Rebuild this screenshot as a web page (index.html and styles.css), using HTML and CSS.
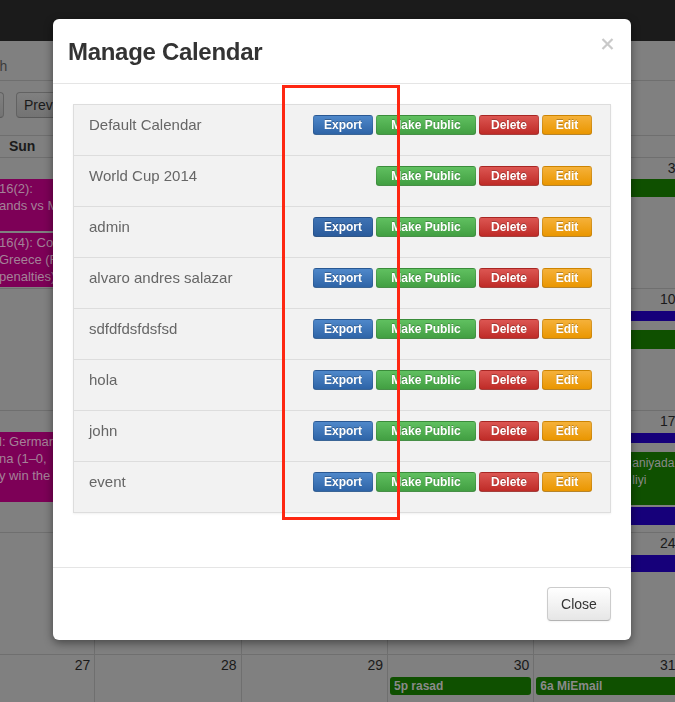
FILE: index.html
```html
<!DOCTYPE html>
<html lang="en">
<head>
<meta charset="utf-8">
<title>Manage Calendar</title>
<link rel="stylesheet" href="styles.css">
</head>
<body>
<div class="page">
  <header class="navbar"></header>
  <div class="searchbar"><span class="search-text">Search</span></div>
  <div class="toolbar">
    <button class="tbtn tbtn-today">Today</button>
    <button class="tbtn tbtn-prev">Prev</button>
  </div>
  <div class="calendar">
    <div class="cal-head">
      <div class="dow">Sun</div><div class="dow"></div><div class="dow"></div><div class="dow"></div><div class="dow"></div><div class="dow"></div><div class="dow"></div>
    </div>
    <div class="week week-1">
      <div class="day">
        <div class="daynum"></div>
        <div class="ev ev-purple ev-p1"><div>16(2):</div><div>ands vs M</div></div>
        <div class="ev ev-purple ev-p2"><div>16(4): Co</div><div>Greece (F</div><div>penalties)</div></div>
      </div>
      <div class="day"><div class="daynum"></div></div>
      <div class="day"><div class="daynum"></div></div>
      <div class="day"><div class="daynum"></div></div>
      <div class="day"><div class="daynum">3</div><div class="ev ev-green mt3"></div></div>
      <div class="day"><div class="daynum"></div></div>
      <div class="day"><div class="daynum"></div></div>
    </div>
    <div class="week week-2">
      <div class="day"><div class="daynum"></div></div>
      <div class="day"><div class="daynum"></div></div>
      <div class="day"><div class="daynum"></div></div>
      <div class="day"><div class="daynum"></div></div>
      <div class="day"><div class="daynum">10</div><div class="ev ev-blue ev-thin"></div><div class="ev ev-green ev-after-thin ev-h19"></div></div>
      <div class="day"><div class="daynum"></div></div>
      <div class="day"><div class="daynum"></div></div>
    </div>
    <div class="week week-3">
      <div class="day">
        <div class="daynum"></div>
        <div class="ev ev-purple ev-p3"><div>l: Germar</div><div>na (1–0,</div><div>y win the</div></div>
      </div>
      <div class="day"><div class="daynum"></div></div>
      <div class="day"><div class="daynum"></div></div>
      <div class="day"><div class="daynum"></div></div>
      <div class="day">
        <div class="daynum">17</div>
        <div class="ev ev-blue ev-thin"></div>
        <div class="ev ev-green ev-after-thin ev-text"><div>aniyada</div><div>liyi</div></div>
        <div class="ev ev-blue mt2"></div>
      </div>
      <div class="day"><div class="daynum"></div></div>
      <div class="day"><div class="daynum"></div></div>
    </div>
    <div class="week week-4">
      <div class="day"><div class="daynum"></div></div>
      <div class="day"><div class="daynum"></div></div>
      <div class="day"><div class="daynum"></div></div>
      <div class="day"><div class="daynum"></div></div>
      <div class="day"><div class="daynum">24</div><div class="ev ev-blue mt4 ev-h17"></div></div>
      <div class="day"><div class="daynum"></div></div>
      <div class="day"><div class="daynum"></div></div>
    </div>
    <div class="week week-5">
      <div class="day"><div class="daynum">27</div></div>
      <div class="day"><div class="daynum">28</div></div>
      <div class="day"><div class="daynum">29</div></div>
      <div class="day"><div class="daynum">30</div><div class="ev ev-green mt4">5p rasad</div></div>
      <div class="day"><div class="daynum">31</div><div class="ev ev-green mt4">6a MiEmail</div></div>
      <div class="day"><div class="daynum"></div></div>
      <div class="day"><div class="daynum"></div></div>
    </div>
  </div>
</div>

<div class="modal">
  <div class="modal-header">
    <h3 class="modal-title">Manage Calendar</h3>
    <svg class="modal-x" width="13" height="12" viewBox="0 0 13 12" aria-label="close">
      <path d="M1.5 1 L11.5 11 M11.5 1 L1.5 11" stroke="#c9c9c9" stroke-width="2.2" stroke-linecap="butt" fill="none"/>
    </svg>
  </div>
  <div class="modal-body">
    <div class="cal-list">
      <div class="cal-row">
        <span class="cal-name">Default Calendar</span>
        <div class="actions"><span class="btn btn-export">Export</span><span class="btn btn-public">Make Public</span><span class="btn btn-delete">Delete</span><span class="btn btn-edit">Edit</span></div>
      </div>
      <div class="cal-row">
        <span class="cal-name">World Cup 2014</span>
        <div class="actions"><span class="btn btn-public">Make Public</span><span class="btn btn-delete">Delete</span><span class="btn btn-edit">Edit</span></div>
      </div>
      <div class="cal-row">
        <span class="cal-name">admin</span>
        <div class="actions"><span class="btn btn-export btn-export-dark">Export</span><span class="btn btn-public">Make Public</span><span class="btn btn-delete">Delete</span><span class="btn btn-edit">Edit</span></div>
      </div>
      <div class="cal-row">
        <span class="cal-name">alvaro andres salazar</span>
        <div class="actions"><span class="btn btn-export">Export</span><span class="btn btn-public">Make Public</span><span class="btn btn-delete">Delete</span><span class="btn btn-edit">Edit</span></div>
      </div>
      <div class="cal-row">
        <span class="cal-name">sdfdfdsfdsfsd</span>
        <div class="actions"><span class="btn btn-export">Export</span><span class="btn btn-public">Make Public</span><span class="btn btn-delete">Delete</span><span class="btn btn-edit">Edit</span></div>
      </div>
      <div class="cal-row">
        <span class="cal-name">hola</span>
        <div class="actions"><span class="btn btn-export">Export</span><span class="btn btn-public">Make Public</span><span class="btn btn-delete">Delete</span><span class="btn btn-edit">Edit</span></div>
      </div>
      <div class="cal-row">
        <span class="cal-name">john</span>
        <div class="actions"><span class="btn btn-export">Export</span><span class="btn btn-public">Make Public</span><span class="btn btn-delete">Delete</span><span class="btn btn-edit">Edit</span></div>
      </div>
      <div class="cal-row">
        <span class="cal-name">event</span>
        <div class="actions"><span class="btn btn-export">Export</span><span class="btn btn-public">Make Public</span><span class="btn btn-delete">Delete</span><span class="btn btn-edit">Edit</span></div>
      </div>
    </div>
  </div>
  <div class="modal-footer">
    <button class="btn-close">Close</button>
  </div>
  <div class="annotation"></div>
</div>
</body>
</html>
```

FILE: styles.css
```css
* { box-sizing: border-box; }
html, body { margin: 0; padding: 0; overflow: hidden; }
/* the page behind the modal is drawn already dimmed by the backdrop */
body {
  width: 675px;
  height: 702px;
  font-family: "Liberation Sans", Arial, sans-serif;
  color: #1a1a1a;
  background: #808080;
}

/* ---------- dimmed background page ---------- */
.page { width: 675px; }
.navbar { height: 41px; background: #1b1b1b; }
.searchbar {
  height: 40px;
  border-bottom: 1px solid #6f6f6f;
  padding-top: 15px;
  font-size: 14px;
  line-height: 20px;
  color: #3c3c3c;
  white-space: nowrap;
}
.search-text { display: inline-block; margin-left: -37px; }
.toolbar {
  height: 54px;
  padding-top: 11px;
  display: flex;
  align-items: flex-start;
  gap: 12px;
  margin-left: -60px;
}
.tbtn {
  height: 26px;
  padding: 0 7px;
  font-family: "Liberation Sans", Arial, sans-serif;
  font-size: 14px;
  line-height: 24px;
  color: #1a1a1a;
  text-align: left;
  background: linear-gradient(#808080, #737373);
  border: 1px solid #626262;
  border-bottom-color: #595959;
  border-radius: 4px;
}
.tbtn-today { width: 64px; }
.tbtn-prev { width: 62px; }

.calendar { margin-left: -51px; width: 1025px; }
.cal-head, .week { display: grid; grid-template-columns: repeat(7, 146.33px); }
.cal-head {
  height: 23px;
  border-top: 1px solid #6f6f6f;
  border-bottom: 1px solid #6f6f6f;
}
.dow { text-align: center; font-size: 14px; font-weight: bold; line-height: 21px; color: #1a1a1a; }
.week { border-bottom: 1px solid #6f6f6f; }
.week-1 { height: 131px; }
.week-2, .week-3, .week-4 { height: 122px; }
.week-5 { height: 60px; }
.day { border-right: 1px solid #6f6f6f; overflow: hidden; min-width: 0; }
.daynum {
  height: 18px;
  padding: 2px 4px 0;
  text-align: right;
  font-size: 14px;
  line-height: 16px;
  color: #1a1a1a;
}
.ev {
  margin: 3px 2px 0;
  height: 18px;
  padding: 0 4px;
  border-radius: 3px;
  color: #8a8a8a;
  font-size: 12px;
  font-weight: bold;
  line-height: 18px;
  white-space: nowrap;
  overflow: hidden;
}
.mt2 { margin-top: 2px; }
.mt3 { margin-top: 3px; }
.mt4 { margin-top: 4px; }
.ev-green { background: #0f5000; }
.ev-blue { background: #16007a; }
.ev-purple {
  background: #7d0057;
  color: #a48298;
  font-size: 13px;
  font-weight: normal;
  line-height: 17px;
  padding: 1px 0 0 48px;
}
.ev-p1 { height: 52px; }
.ev-p2 { height: 54px; margin-top: 2px; }
.ev-p3 { height: 70px; }
.ev-thin { height: 10px; margin-top: 4px; }
.ev-after-thin { margin-top: 9px; }
.ev-h19 { height: 19px; }
.ev-h17 { height: 17px; }
.ev-text {
  height: 53px;
  padding: 3px 0 0 96px;
  line-height: 17px;
  font-weight: normal;
}

/* ---------- modal ---------- */
.modal {
  position: fixed;
  z-index: 20;
  left: 53px;
  top: 19px;
  width: 578px;
  background: #fff;
  border-radius: 6px;
  box-shadow: 0 3px 10px rgba(0, 0, 0, 0.45);
}
.modal-header {
  display: flex;
  justify-content: space-between;
  align-items: flex-start;
  padding: 16px 17px 15px 15px;
  border-bottom: 1px solid #e5e5e5;
}
.modal-title {
  margin: 0;
  font-size: 24px;
  line-height: 33px;
  font-weight: bold;
  letter-spacing: -0.3px;
  color: #333;
}
.modal-x { margin-top: 3px; }
.modal-body { padding: 20px 20px 54px; }
.cal-list {
  background: #f2f2f2;
  border: 1px solid #ddd;
  box-shadow: 0 1px 2px rgba(0, 0, 0, 0.06);
}
.cal-row {
  display: flex;
  justify-content: space-between;
  align-items: flex-start;
  height: 50px;
  padding: 10px 18px 20px 15px;
}
.cal-row + .cal-row { height: 51px; border-top: 1px solid #ddd; }
.cal-name { font-size: 15px; line-height: 20px; color: #666; }
.actions { display: flex; gap: 3px; }
.btn {
  display: block;
  height: 20px;
  border: 1px solid rgba(0, 0, 0, 0.12);
  border-bottom-color: rgba(0, 0, 0, 0.25);
  border-radius: 3px;
  color: #fff;
  font-size: 12px;
  font-weight: bold;
  line-height: 18px;
  text-align: center;
  text-shadow: 0 -1px 0 rgba(0, 0, 0, 0.25);
}
.btn-export { width: 60px; background: linear-gradient(#4f88ca, #2e64a7); }
.btn-export-dark { background: linear-gradient(#3f73b4, #2a5b9c); }
.btn-public { width: 100px; background: linear-gradient(#60c060, #429f42); }
.btn-delete { width: 60px; background: linear-gradient(#dc5652, #bf2b27); }
.btn-edit { width: 50px; background: linear-gradient(#f5b13a, #ea9600); }

.modal-footer {
  display: flex;
  justify-content: flex-end;
  padding: 19px 20px;
  border-top: 1px solid #e5e5e5;
}
.btn-close {
  width: 64px;
  height: 34px;
  padding: 0;
  font-family: "Liberation Sans", Arial, sans-serif;
  font-size: 14px;
  color: #333;
  background: linear-gradient(#ffffff, #e6e6e6);
  border: 1px solid #cccccc;
  border-bottom-color: #b3b3b3;
  border-radius: 4px;
  box-shadow: 0 1px 2px rgba(0, 0, 0, 0.05);
}

/* red highlight drawn over the screenshot */
.annotation {
  position: absolute;
  left: 229px;
  top: 66px;
  width: 118px;
  height: 435px;
  border: 3px solid #fe2712;
  pointer-events: none;
}
```
